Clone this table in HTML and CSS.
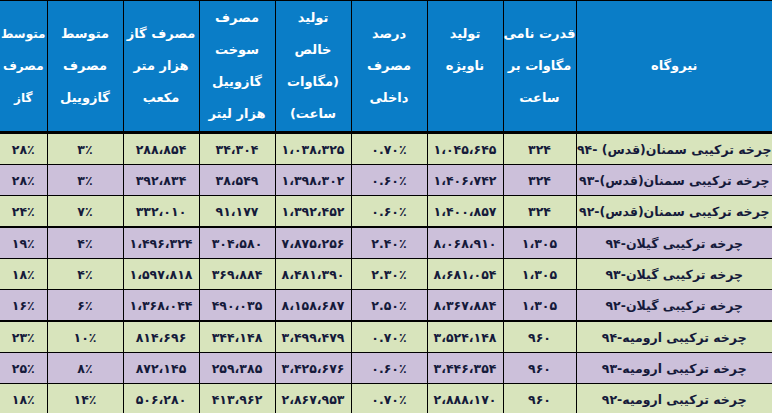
FILE: index.html
```html
<!DOCTYPE html>
<html lang="fa" dir="rtl">
<head>
<meta charset="utf-8">
<link rel="stylesheet" href="styles.css">
</head>
<body>
<table class="report">
<colgroup>
<col class="c-name"><col class="c-cap"><col class="c-mid"><col class="c-mid"><col class="c-mid"><col class="c-mid"><col class="c-mid"><col class="c-mid"><col class="c-last">
</colgroup>
<thead>
<tr>
<th>نیروگاه</th>
<th>قدرت نامی<br>مگاوات بر<br>ساعت</th>
<th>تولید<br>ناویژه<br>&nbsp;</th>
<th>درصد<br>مصرف<br>داخلی</th>
<th>تولید<br>خالص<br>(مگاوات<br>ساعت)</th>
<th>مصرف<br>سوخت<br>گازوییل<br>هزار لیتر</th>
<th>مصرف گاز<br>هزار متر<br>مکعب</th>
<th>متوسط<br>مصرف<br>گازوییل</th>
<th class="narrow">متوسط<br>مصرف<br>گاز</th>
</tr>
</thead>
<tbody>
<tr class="g"><td>چرخه ترکیبی سمنان(قدس) -۹۴</td><td>۳۲۴</td><td>۱،۰۴۵،۶۴۵</td><td>۰.۷۰٪</td><td>۱،۰۳۸،۳۲۵</td><td>۳۴،۳۰۴</td><td>۲۸۸،۸۵۴</td><td>۳٪</td><td>۲۸٪</td></tr>
<tr class="p"><td>چرخه ترکیبی سمنان(قدس)-۹۳</td><td>۳۲۴</td><td>۱،۴۰۶،۷۴۲</td><td>۰.۶۰٪</td><td>۱،۳۹۸،۳۰۲</td><td>۳۸،۵۴۹</td><td>۳۹۲،۸۳۴</td><td>۳٪</td><td>۲۸٪</td></tr>
<tr class="g sep"><td>چرخه ترکیبی سمنان(قدس)-۹۲</td><td>۳۲۴</td><td>۱،۴۰۰،۸۵۷</td><td>۰.۶۰٪</td><td>۱،۳۹۲،۴۵۲</td><td>۹۱،۱۷۷</td><td>۳۳۲،۰۱۰</td><td>۷٪</td><td>۲۴٪</td></tr>
<tr class="p"><td>چرخه ترکیبی گیلان-۹۴</td><td>۱،۳۰۵</td><td>۸،۰۶۸،۹۱۰</td><td>۲.۴۰٪</td><td>۷،۸۷۵،۲۵۶</td><td>۳۰۴،۵۸۰</td><td>۱،۴۹۶،۳۲۴</td><td>۴٪</td><td>۱۹٪</td></tr>
<tr class="g"><td>چرخه ترکیبی گیلان-۹۳</td><td>۱،۳۰۵</td><td>۸،۶۸۱،۰۵۴</td><td>۲.۳۰٪</td><td>۸،۴۸۱،۳۹۰</td><td>۳۶۹،۸۸۴</td><td>۱،۵۹۷،۸۱۸</td><td>۴٪</td><td>۱۸٪</td></tr>
<tr class="p sep"><td>چرخه ترکیبی گیلان-۹۲</td><td>۱،۳۰۵</td><td>۸،۳۶۷،۸۸۴</td><td>۲.۵۰٪</td><td>۸،۱۵۸،۶۸۷</td><td>۴۹۰،۰۳۵</td><td>۱،۳۶۸،۰۴۴</td><td>۶٪</td><td>۱۶٪</td></tr>
<tr class="g"><td>چرخه ترکیبی ارومیه-۹۴</td><td>۹۶۰</td><td>۳،۵۲۴،۱۴۸</td><td>۰.۷۰٪</td><td>۳،۴۹۹،۴۷۹</td><td>۳۴۴،۱۴۸</td><td>۸۱۴،۶۹۶</td><td>۱۰٪</td><td>۲۳٪</td></tr>
<tr class="p"><td>چرخه ترکیبی ارومیه-۹۳</td><td>۹۶۰</td><td>۳،۴۴۶،۳۵۴</td><td>۰.۶۰٪</td><td>۳،۴۲۵،۶۷۶</td><td>۲۵۹،۳۸۵</td><td>۸۷۲،۱۴۵</td><td>۸٪</td><td>۲۵٪</td></tr>
<tr class="g"><td>چرخه ترکیبی ارومیه-۹۲</td><td>۹۶۰</td><td>۲،۸۸۸،۱۷۰</td><td>۰.۷۰٪</td><td>۲،۸۶۷،۹۵۳</td><td>۴۱۳،۹۶۲</td><td>۵۰۶،۲۸۰</td><td>۱۴٪</td><td>۱۸٪</td></tr>
</tbody>
</table>
</body>
</html>
```
FILE: styles.css
```css
html, body {
  margin: 0;
  padding: 0;
  background: #ffffff;
  overflow: hidden;
}
.report {
  width: 772px;
  table-layout: fixed;
  border-collapse: collapse;
  font-family: "DejaVu Sans", sans-serif;
  font-weight: bold;
  direction: rtl;
}
.c-name { width: 196px; }
.c-cap { width: 73px; }
.c-mid { width: 76px; }
.c-last { width: 47px; }
.report th {
  background: #0a7dc7;
  color: #ffffff;
  font-size: 13px;
  line-height: 32px;
  height: 130px;
  padding: 0;
  border-top: 1px solid #000;
  border-left: 1px solid #000;
  border-bottom: 3px solid #000;
  text-align: center;
  vertical-align: middle;
  white-space: nowrap;
}
.report th.narrow {
  font-size: 12px;
}
.report td {
  height: 30px;
  padding: 0;
  font-size: 12.5px;
  color: #151a3a;
  text-align: center;
  vertical-align: middle;
  border-left: 1px solid #000;
  border-bottom: 1px solid #000;
  white-space: nowrap;
}
.report th:last-child, .report td:last-child { border-left: none; }
.report tr.sep td { border-bottom: 2px solid #000; }
.report tr.g td { background: #d8e4bc; }
.report tr.p td { background: #ccc0da; }
```
